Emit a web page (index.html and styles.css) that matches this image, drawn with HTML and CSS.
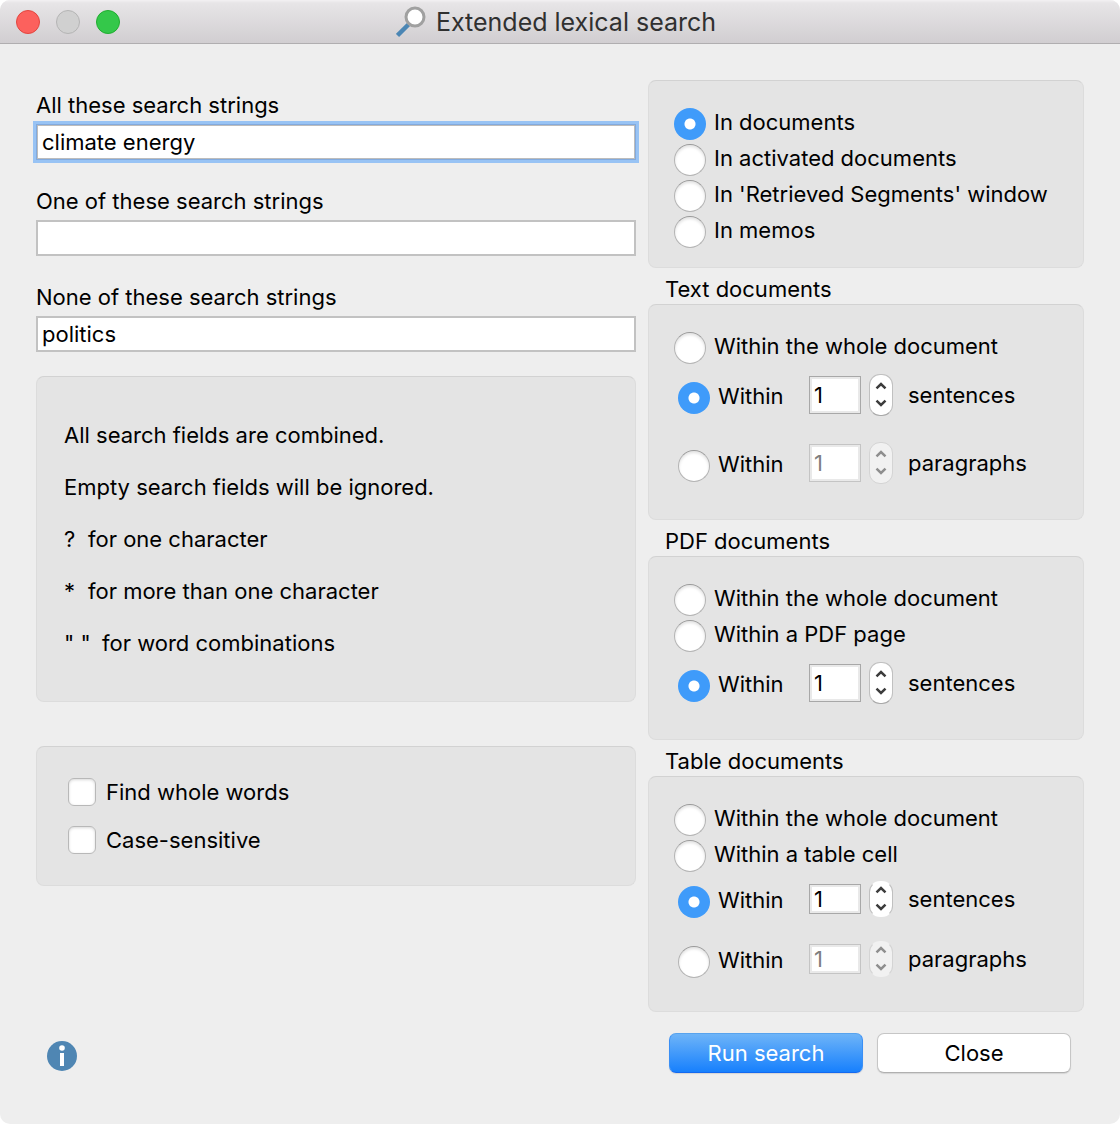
FILE: index.html
```html
<!DOCTYPE html>
<html lang="en">
<head>
<meta charset="utf-8">
<title>Extended lexical search</title>
<link rel="stylesheet" href="styles.css">
</head>
<body>
<svg class="defs" aria-hidden="true">
  <symbol id="up" viewBox="0 0 12 8"><path d="M1.500 6.300 6 2l4.500 4.300"/></symbol>
  <symbol id="down" viewBox="0 0 12 8"><path d="M1.500 1.700 6 6l4.500-4.300"/></symbol>
</svg>
<div class="window">
  <header class="titlebar">
    <div class="lights">
      <button class="light light-close" aria-label="Close window"></button>
      <button class="light light-min" aria-label="Minimize" disabled></button>
      <button class="light light-zoom" aria-label="Zoom"></button>
    </div>
    <h1 class="title">
      <svg class="title-icon" viewBox="0 0 32 32" aria-hidden="true">
        <path d="M12.500 18.500 1.500 29.500" stroke="#4b86b4" stroke-width="4.500"/>
        <circle cx="19" cy="11" r="9" fill="#fff" stroke="#a0a0a0" stroke-width="3"/>
      </svg>
      <span>Extended lexical search</span>
    </h1>
  </header>

  <form class="content">
    <div class="columns">
      <div class="left">
        <div class="fields">
          <div class="field"><label for="all">All these search strings</label><input class="text focused" id="all" type="text" value="climate energy"></div>
          <div class="field"><label for="one">One of these search strings</label><input class="text" id="one" type="text"></div>
          <div class="field"><label for="none">None of these search strings</label><input class="text" id="none" type="text" value="politics"></div>
        </div>
        <div class="panel help">
          <p>All search fields are combined.</p>
          <p>Empty search fields will be ignored.</p>
          <p><span class="key">?</span>for one character</p>
          <p><span class="key">*</span>for more than one character</p>
          <p><span class="key key-wide">" "</span>for word combinations</p>
        </div>
        <div class="panel checks">
          <label class="check"><input type="checkbox"><span>Find whole words</span></label>
          <label class="check"><input type="checkbox"><span>Case-sensitive</span></label>
        </div>
      </div>

      <div class="right">
        <div class="panel scope" role="radiogroup" aria-label="Search in">
          <label class="option"><input type="radio" name="scope" checked><span>In documents</span></label>
          <label class="option"><input type="radio" name="scope"><span>In activated documents</span></label>
          <label class="option"><input type="radio" name="scope"><span>In 'Retrieved Segments' window</span></label>
          <label class="option"><input type="radio" name="scope"><span>In memos</span></label>
        </div>

        <h2 class="heading" id="h-text">Text documents</h2>
        <div class="panel group" role="radiogroup" aria-labelledby="h-text">
          <label class="option"><input type="radio" name="text"><span>Within the whole document</span></label>
          <div class="ranges">
            <div class="range">
              <label class="option"><input type="radio" name="text" checked><span>Within</span></label>
              <div class="amount">
                <input class="number" id="ts" type="text" value="1">
                <span class="stepper"><button type="button" aria-label="More"><svg><use href="#up"/></svg></button><button type="button" aria-label="Less"><svg><use href="#down"/></svg></button></span>
                <label for="ts">sentences</label>
              </div>
            </div>
            <div class="range">
              <label class="option"><input type="radio" name="text"><span>Within</span></label>
              <div class="amount">
                <input class="number" id="tp" type="text" value="1" disabled>
                <span class="stepper off"><button type="button" aria-label="More" disabled><svg><use href="#up"/></svg></button><button type="button" aria-label="Less" disabled><svg><use href="#down"/></svg></button></span>
                <label for="tp">paragraphs</label>
              </div>
            </div>
          </div>
        </div>

        <h2 class="heading" id="h-pdf">PDF documents</h2>
        <div class="panel group" role="radiogroup" aria-labelledby="h-pdf">
          <label class="option"><input type="radio" name="pdf"><span>Within the whole document</span></label>
          <label class="option"><input type="radio" name="pdf"><span>Within a PDF page</span></label>
          <div class="ranges">
            <div class="range">
              <label class="option"><input type="radio" name="pdf" checked><span>Within</span></label>
              <div class="amount">
                <input class="number" id="ps" type="text" value="1">
                <span class="stepper"><button type="button" aria-label="More"><svg><use href="#up"/></svg></button><button type="button" aria-label="Less"><svg><use href="#down"/></svg></button></span>
                <label for="ps">sentences</label>
              </div>
            </div>
          </div>
        </div>

        <h2 class="heading" id="h-table">Table documents</h2>
        <div class="panel group compact" role="radiogroup" aria-labelledby="h-table">
          <label class="option"><input type="radio" name="table"><span>Within the whole document</span></label>
          <label class="option"><input type="radio" name="table"><span>Within a table cell</span></label>
          <div class="ranges">
            <div class="range">
              <label class="option"><input type="radio" name="table" checked><span>Within</span></label>
              <div class="amount">
                <input class="number" id="bs" type="text" value="1">
                <span class="stepper"><button type="button" aria-label="More"><svg><use href="#up"/></svg></button><button type="button" aria-label="Less"><svg><use href="#down"/></svg></button></span>
                <label for="bs">sentences</label>
              </div>
            </div>
            <div class="range">
              <label class="option"><input type="radio" name="table"><span>Within</span></label>
              <div class="amount">
                <input class="number" id="bp" type="text" value="1" disabled>
                <span class="stepper off"><button type="button" aria-label="More" disabled><svg><use href="#up"/></svg></button><button type="button" aria-label="Less" disabled><svg><use href="#down"/></svg></button></span>
                <label for="bp">paragraphs</label>
              </div>
            </div>
          </div>
        </div>
      </div>
    </div>

    <footer class="footer">
      <button type="button" class="info" aria-label="Help">
        <svg viewBox="0 0 30 30" aria-hidden="true">
          <circle cx="15" cy="15" r="15" fill="#4f86b3"/>
          <circle cx="15" cy="7" r="2.800" fill="#fff"/>
          <path d="M13 12h4v13h-4z" fill="#fff"/>
        </svg>
      </button>
      <div class="actions">
        <button type="button" class="button primary">Run search</button>
        <button type="button" class="button">Close</button>
      </div>
    </footer>
  </form>
</div>
</body>
</html>
```

FILE: styles.css
```css
* { box-sizing: border-box; }

body {
  margin: 0;
  background: #fff;
  color: #000;
  font: 22px/28px Inter, "Liberation Sans", sans-serif;
}

button, input { font: inherit; color: inherit; margin: 0; padding: 0; }
h1, h2, p { margin: 0; font-size: inherit; font-weight: 400; }

.defs { display: none; }

.window {
  display: flex;
  flex-direction: column;
  min-height: 100vh;
  border-radius: 10px;
  overflow: hidden;
  background: #eee;
}

/* Title bar */
.titlebar {
  display: grid;
  grid-template-columns: 1fr auto 1fr;
  align-items: center;
  height: 44px;
  padding: 0 24px 0 16px;
  border-bottom: 1px solid #b0aeb0;
  background: linear-gradient(#f3f1f3, #e7e5e7 3px, #d1ced1);
}

.lights { display: flex; gap: 16px; }

.light {
  width: 24px;
  height: 24px;
  border: 1px solid #b4b4b4;
  border-radius: 50%;
  background: #d0d0d0;
}
.light-close { background: #fc615d; border-color: #e2463f; }
.light-zoom { background: #34c84a; border-color: #20ad30; }

.title {
  display: flex;
  align-items: center;
  gap: 8px;
  color: #303030;
  font-size: 25px;
  line-height: 32px;
  white-space: nowrap;
}
.title-icon { width: 32px; height: 32px; }

/* Body of the dialog */
.content {
  flex: 1;
  display: flex;
  flex-direction: column;
  padding: 36px 36px 50px;
}

.columns, .footer {
  display: grid;
  grid-template-columns: minmax(0, 1fr) 436px;
  column-gap: 12px;
}

.fields {
  display: flex;
  flex-direction: column;
  gap: 27px;
  padding-top: 11px;
  margin-bottom: 24px;
}

.field { display: flex; flex-direction: column; gap: 5px; }

.text {
  width: 100%;
  height: 36px;
  padding: 0 4px;
  border: 2px solid #c2c2c2;
  border-radius: 0;
  background: #fff;
  outline: none;
}
.focused {
  border: 1px solid #82aade;
  padding: 0 5px;
  box-shadow: inset 0 0 0 1px #bcbcbc, 0 0 0 3px #98c3f4;
}

.panel {
  border: 1px solid #dcdcdc;
  border-top-color: #d2d2d2;
  border-radius: 8px;
  background: #e4e4e4;
}

.help { padding: 32px 27px; margin-bottom: 44px; line-height: 52px; }
.key { display: inline-block; width: 24px; }
.key-wide { width: 38px; }

.checks { padding: 21px 31px; }
.check { display: flex; align-items: center; gap: 10px; height: 48px; }

.check input {
  appearance: none;
  width: 28px;
  height: 28px;
  border: 1px solid #b8b8b8;
  border-radius: 6px;
  background: #fff;
  box-shadow: inset 0 1px 3px #d8d8d8;
}

/* Radio groups */
.scope { padding: 25px 25px 17px; }
.group { padding: 25px 25px 21px; }

.heading { padding: 6px 17px 0; line-height: 30px; }

.option { display: flex; align-items: center; gap: 8px; height: 36px; white-space: nowrap; }
.option span { padding-bottom: 4px; }

.option input {
  appearance: none;
  flex: none;
  width: 32px;
  height: 32px;
  border: 1px solid #b4b4b4;
  border-top-color: #999;
  border-radius: 50%;
  background: #fff;
  box-shadow: inset 0 2px 3px #e2e2e2;
}
.option input:checked {
  border: 0;
  background: radial-gradient(circle, #fff 5px, #3f9bfa 6px);
  box-shadow: none;
}

.ranges { display: flex; flex-direction: column; gap: 4px; padding-left: 4px; }
.range { display: flex; align-items: center; height: 64px; }
.range .option { flex: 0 0 131px; }

.amount { display: flex; align-items: center; padding-bottom: 7px; }

.number {
  width: 52px;
  height: 38px;
  padding: 0 4px;
  margin-right: 8px;
  border: 1px solid #a8a8a8;
  border-radius: 0;
  background: #fff;
  box-shadow: inset 0 0 0 2px #e9e9e9;
}
.number:disabled { color: #7f7f7f; border-color: #c4c4c4; }

.stepper {
  display: flex;
  flex-direction: column;
  width: 24px;
  height: 42px;
  margin-right: 15px;
  padding: 3px 0;
  border: 1px solid #c0c0c0;
  border-bottom-color: #a8a8a8;
  border-radius: 11px;
  background: #fff;
  color: #3c3c3c;
}
.stepper button {
  flex: 1;
  display: flex;
  align-items: center;
  justify-content: center;
  border: 0;
  background: none;
}
.stepper svg {
  width: 12px;
  height: 8px;
  fill: none;
  stroke: currentColor;
  stroke-width: 2.500px;
}
.stepper.off { color: #8e8e8e; background: #f1f1f1; border-color: #d4d4d4; }

.compact .range { height: 56px; }
.compact .number { height: 30px; }
.compact .stepper { height: 36px; padding: 0; border-top-color: transparent; border-bottom-color: transparent; }

/* Footer */
.footer { padding-top: 21px; }

.info { justify-self: start; margin: 8px 11px 0; width: 30px; height: 30px; border: 0; background: none; }
.info svg { display: block; }

.actions { display: flex; gap: 14px; padding: 0 13px 0 21px; }

.button {
  flex: 1;
  height: 40px;
  border: 1px solid #c6c6c6;
  border-bottom-color: #b0b0b0;
  border-radius: 7px;
  background: #fff;
  box-shadow: 0 1px 1px #d4d4d4;
}
.primary {
  color: #fff;
  border-color: #58a3ee #3a8ff5 #1469f0;
  background: linear-gradient(#6eb4f8, #1780fd);
}
```
